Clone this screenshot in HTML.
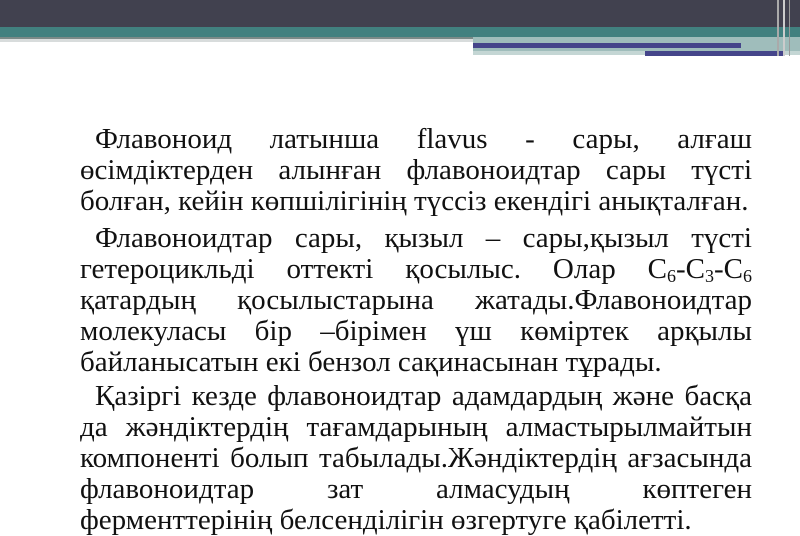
<!DOCTYPE html>
<html><head><meta charset="utf-8"><style>
body{margin:0;width:800px;height:535px;overflow:hidden;background:#fff;position:relative;font-family:"Liberation Serif",serif;}
.b{position:absolute}
.l{position:absolute;left:80px;width:672px;font-size:29px;line-height:31px;color:#111;white-space:nowrap;}
.j{text-align:justify;text-align-last:justify;white-space:normal}
sub{font-size:18px;vertical-align:-4px;line-height:0}
</style></head><body>
<div class="b" style="left:0;top:0;width:800px;height:27px;background:#41414f"></div>
<div class="b" style="left:0;top:27px;width:800px;height:10px;background:#41807f"></div>
<div class="b" style="left:0;top:37px;width:473px;height:2px;background:#7a8a88"></div>
<div class="b" style="left:0;top:39px;width:473px;height:3px;background:#d8dcdc"></div>
<div class="b" style="left:473px;top:37px;width:327px;height:14px;background:#9fbdbb"></div>
<div class="b" style="left:473px;top:51px;width:327px;height:4px;background:#c4d6d4"></div>
<div class="b" style="left:473px;top:43px;width:268px;height:5px;background:#45458a"></div>
<div class="b" style="left:645px;top:51px;width:140px;height:5px;background:#45458a"></div>
<div class="b" style="left:777px;top:0;width:2px;height:56px;background:#aaa"></div>
<div class="b" style="left:783px;top:0;width:2px;height:56px;background:#ccc"></div>
<div class="b" style="left:789px;top:0;width:1px;height:56px;background:#999"></div>

<div class="l j" style="top:124px;padding-left:15px;width:657px">Флавоноид латынша flavus - сары, алғаш</div>
<div class="l j" style="top:155px">өсімдіктерден алынған флавоноидтар сары түсті</div>
<div class="l" style="top:186px">болған, кейін көпшілігінің түссіз екендігі анықталған.</div>
<div class="l j" style="top:223px;padding-left:15px;width:657px">Флавоноидтар сары, қызыл – сары,қызыл түсті</div>
<div class="l j" style="top:254px">гетероцикльді оттекті қосылыс. Олар C<sub>6</sub>-C<sub>3</sub>-C<sub>6</sub></div>
<div class="l j" style="top:285px">қатардың қосылыстарына жатады.Флавоноидтар</div>
<div class="l j" style="top:316px">молекуласы бір –бірімен үш көміртек арқылы</div>
<div class="l" style="top:347px">байланысатын екі бензол сақинасынан тұрады.</div>
<div class="l j" style="top:381px;padding-left:15px;width:657px">Қазіргі кезде флавоноидтар адамдардың және басқа</div>
<div class="l j" style="top:412px">да жәндіктердің тағамдарының алмастырылмайтын</div>
<div class="l j" style="top:443px">компоненті болып табылады.Жәндіктердің ағзасында</div>
<div class="l j" style="top:474px">флавоноидтар зат алмасудың көптеген</div>
<div class="l" style="top:505px">ферменттерінің белсенділігін өзгертуге қабілетті.</div>
</body></html>
